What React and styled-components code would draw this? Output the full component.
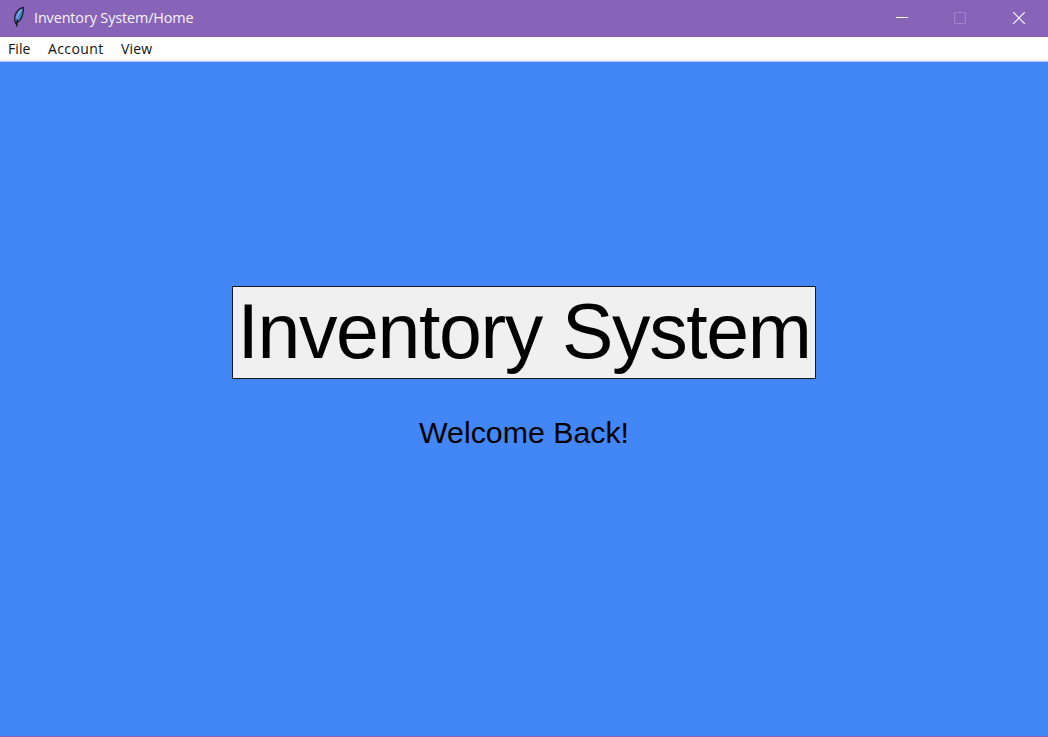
import React from 'react';
import styled, { createGlobalStyle } from 'styled-components';

const GlobalStyle = createGlobalStyle`
  * { box-sizing: border-box; }
  body { margin: 0; overflow: hidden; }
`;

const Window = styled.div`
  display: flex;
  flex-direction: column;
  width: 100vw;
  height: 100vh;
  border-bottom: 1px solid #8764b8;
  background: #4387f6;
`;

const TitleBar = styled.header`
  display: flex;
  align-items: center;
  flex: 0 0 37px;
  padding-left: 12px;
  background: #8764b8;
`;

const FeatherIcon = styled.svg`
  width: 14px;
  height: 22px;
  margin: 0 8px 3px 0;
`;

const Title = styled.span`
  flex: 1;
  padding-bottom: 1px;
  color: #f7f3fb;
  font: 400 14.4px/20px 'Open Sans', 'Noto Sans', sans-serif;
  letter-spacing: -0.12px;
  white-space: nowrap;
`;

const Controls = styled.div`
  display: flex;
  align-self: stretch;
`;

const ControlButton = styled.button`
  display: grid;
  place-items: center;
  width: ${(p) => p.$width}px;
  padding: 0 0 1px;
  border: 0;
  background: none;
  color: ${(p) => (p.disabled ? '#a283ca' : '#fff')};

  svg { display: block; }
`;

const MenuBar = styled.nav`
  display: flex;
  align-items: center;
  flex: 0 0 25px;
  gap: 17px;
  padding: 0 0 0 8px;
  border-bottom: 1px solid #acc9f7;
  background: linear-gradient(#fff 22px, #f0f0f0 23px);
`;

const MenuItem = styled.span`
  width: ${(p) => p.$width}px;
  color: #111;
  font: 400 14px/20px 'Open Sans', 'Noto Sans', sans-serif;
  letter-spacing: ${(p) => p.$tracking}px;
  white-space: nowrap;
`;

const Content = styled.main`
  display: flex;
  flex: 1;
  flex-direction: column;
  align-items: center;
  padding-top: 224px;
  color: #000;
  font-family: 'Liberation Sans', Arial, sans-serif;
`;

const Heading = styled.h1`
  width: 584px;
  height: 93px;
  margin: 0;
  border: 1px solid #15181e;
  background: #f0f0f0;
  font-size: 77px;
  font-weight: 400;
  letter-spacing: -1.35px;
  line-height: 88px;
  text-align: center;
  white-space: nowrap;
`;

const Welcome = styled.p`
  margin: 36px 0 0;
  font-size: 30.3px;
  line-height: 36px;
  white-space: nowrap;
`;

const menus = [
  { label: 'File', width: 23, tracking: 0.1 },
  { label: 'Account', width: 56, tracking: 0.4 },
  { label: 'View', width: 32, tracking: 0.2 },
];

export default function App() {
  return (
    <>
      <GlobalStyle />
      <Window>
        <TitleBar>
          <FeatherIcon viewBox="0 0 14 22">
            <path d="M11.2 1.4C7.6 2.4 3.9 6 2.8 10.5C2.3 13 2.6 15.2 3.6 17.3C7.4 16 9.8 12.5 10.6 8.2C11 6 11.9 3.5 11.2 1.4Z" fill="#4c7fc0" stroke="#181823" strokeWidth="1.2" />
            <path d="M9.4 3.6C7.1 6.1 5.4 9.3 4.6 12.6" fill="none" stroke="#79a8dc" strokeWidth="1.9" />
            <path d="M5.6 13.5C5 15.5 4.7 17.5 4.6 20.5" fill="none" stroke="#171721" strokeWidth="1.5" />
          </FeatherIcon>
          <Title>Inventory System/Home</Title>
          <Controls>
            <ControlButton aria-label="Minimize" $width={58}>
              <svg width="14" height="14" shapeRendering="crispEdges">
                <path d="M1 6.5H13" stroke="currentColor" />
              </svg>
            </ControlButton>
            <ControlButton aria-label="Maximize" $width={58} disabled>
              <svg width="14" height="14" shapeRendering="crispEdges">
                <path d="M1.5 1.5H12.5V12.5H1.5Z" fill="none" stroke="currentColor" />
              </svg>
            </ControlButton>
            <ControlButton aria-label="Close" $width={59}>
              <svg width="14" height="14">
                <path d="M1.2 1.2L12.8 12.8M12.8 1.2L1.2 12.8" stroke="currentColor" strokeWidth="1.2" />
              </svg>
            </ControlButton>
          </Controls>
        </TitleBar>
        <MenuBar>
          {menus.map((m) => (
            <MenuItem key={m.label} $width={m.width} $tracking={m.tracking}>{m.label}</MenuItem>
          ))}
        </MenuBar>
        <Content>
          <Heading>Inventory System</Heading>
          <Welcome>Welcome Back!</Welcome>
        </Content>
      </Window>
    </>
  );
}
